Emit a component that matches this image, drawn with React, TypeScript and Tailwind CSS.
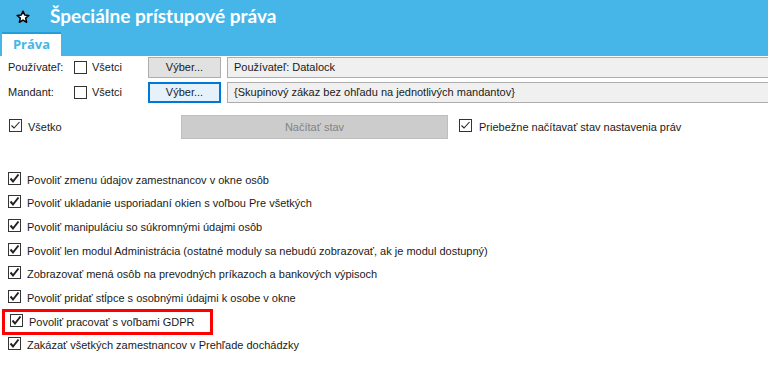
import React from "react";

const Check = ({ checked, bold }: { checked: boolean; bold?: boolean }) => (
  <span className="inline-flex w-[13px] h-[13px] border border-[#333333] bg-white shrink-0 items-center justify-center">
    {checked && (
      <svg width="11" height="11" viewBox="0 0 11 11">
        <path
          d={bold ? "M1.5 5.5 L4 8.5 L9.5 1.5" : "M1.5 5.5 L4 8 L9.5 2"}
          fill="none"
          stroke="#222222"
          strokeWidth={bold ? 2 : 1.1}
        />
      </svg>
    )}
  </span>
);

const items = [
  "Povoliť zmenu údajov zamestnancov v okne osôb",
  "Povoliť ukladanie usporiadaní okien s voľbou Pre všetkých",
  "Povoliť manipuláciu so súkromnými údajmi osôb",
  "Povoliť len modul Administrácia (ostatné moduly sa nebudú zobrazovať, ak je modul dostupný)",
  "Zobrazovať mená osôb na prevodných príkazoch a bankových výpisoch",
  "Povoliť pridať stĺpce s osobnými údajmi k osobe v okne",
  "Povoliť pracovať s voľbami GDPR",
  "Zakázať všetkých zamestnancov v Prehľade dochádzky",
];

export default function App() {
  return (
    <div className="w-[768px] h-[385px] bg-white overflow-hidden text-[11px] text-[#1a1a1a] font-['Liberation_Sans',Arial,sans-serif]">
      <div className="h-[56px] bg-[#46b6e8] flex flex-col">
        <div className="flex items-center h-[32px] pl-[16px]">
          <svg width="14" height="14" viewBox="0 0 24 24" className="mt-[2px] shrink-0">
            <path
              d="M12 2 L14.9 8.6 L22 9.3 L16.6 14 L18.2 21 L12 17.3 L5.8 21 L7.4 14 L2 9.3 L9.1 8.6 Z"
              fill="white"
              stroke="black"
              strokeWidth="2.6"
              strokeLinejoin="round"
            />
          </svg>
          <span className="ml-[20px] text-white font-bold text-[19px] font-['Lato',sans-serif]">
            Špeciálne prístupové práva
          </span>
        </div>
        <div className="flex-1 flex items-end pl-[2px]">
          <div className="w-[59px] h-[24px] bg-white border-t-2 border-[#1f9fdc] flex items-center justify-center">
            <span className="text-[#46b6e8] font-bold text-[13px] font-['Open_Sans',sans-serif]">Práva</span>
          </div>
        </div>
      </div>

      <div className="flex items-center mt-[1px] h-[21px]">
        <span className="ml-[8px] w-[66px]">Používateľ:</span>
        <Check checked={false} />
        <span className="ml-[5px] w-[56px]">Všetci</span>
        <div className="w-[73px] h-[21px] bg-[#e1e1e1] border border-[#adadad] flex items-center justify-center">
          Výber...
        </div>
        <div className="ml-[6px] flex-1 h-[21px] bg-[#f0f0f0] border-y border-[#adadad] border-l flex items-center pl-[6px]">
          Používateľ: Datalock
        </div>
      </div>

      <div className="flex items-center mt-[4px] h-[21px]">
        <span className="ml-[8px] w-[66px]">Mandant:</span>
        <Check checked={false} />
        <span className="ml-[5px] w-[56px]">Všetci</span>
        <div className="w-[73px] h-[21px] bg-[#e5f1fb] border-2 border-[#0078d7] flex items-center justify-center">
          Výber...
        </div>
        <div className="ml-[6px] flex-1 h-[21px] bg-[#f0f0f0] border-y border-[#adadad] border-l flex items-center pl-[6px]">
          {"{Skupinový zákaz bez ohľadu na jednotlivých mandantov}"}
        </div>
      </div>

      <div className="flex items-center mt-[12px] h-[24px]">
        <span className="ml-[9px]"><Check checked={true} /></span>
        <span className="ml-[6px] w-[153px]">Všetko</span>
        <div className="w-[267px] h-[24px] bg-[#cccccc] border border-[#bfbfbf] flex items-center justify-center text-[#838383]">
          Načítať stav
        </div>
        <span className="ml-[11px]"><Check checked={true} /></span>
        <span className="ml-[7px]">Priebežne načítavať stav nastavenia práv</span>
      </div>

      <div className="mt-[29px] flex flex-col">
        {items.map((t, i) => (
          <div key={i} className="h-[23.7px] flex items-center">
            {i === 6 ? (
              <div className="ml-[2px] w-[211px] h-[26px] border-[3px] border-[#ff0000] flex items-center">
                <span className="ml-[5px]"><Check checked={true} bold /></span>
                <span className="ml-[6px]">{t}</span>
              </div>
            ) : (
              <>
                <span className="ml-[8px]"><Check checked={true} bold /></span>
                <span className="ml-[6px]">{t}</span>
              </>
            )}
          </div>
        ))}
      </div>
    </div>
  );
}
